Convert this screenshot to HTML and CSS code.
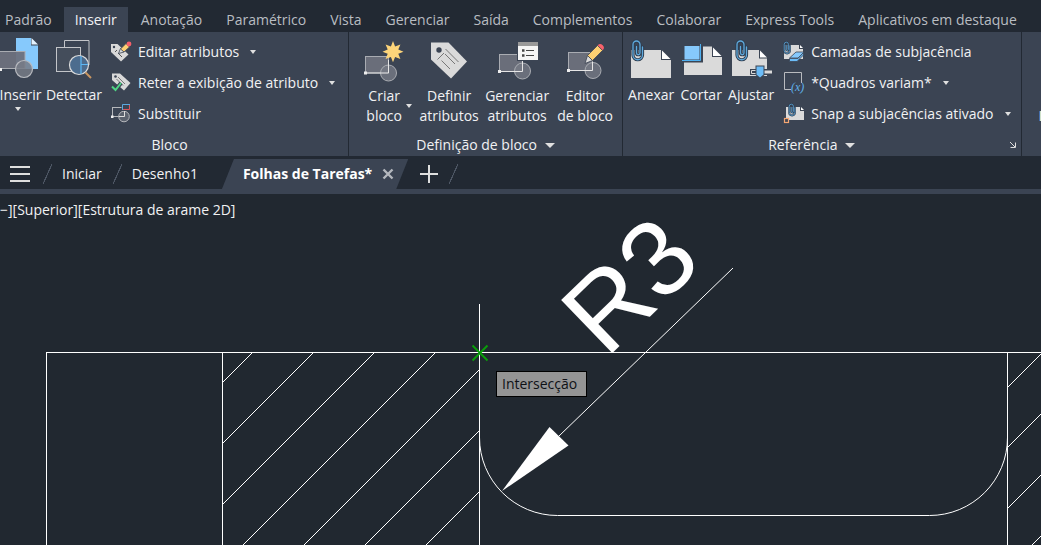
FILE: index.html
```html
<!DOCTYPE html>
<html lang="pt">
<head>
<meta charset="utf-8">
<title>Folhas de Tarefas</title>
<link rel="stylesheet" href="styles.css">
</head>
<body>
<svg class="defs" width="0" height="0" aria-hidden="true">
  <defs>
    <g id="paperclip" fill="none" stroke-linecap="round" stroke-linejoin="round">
      <path d="M5.500 7.500V14a1.700 1.700 0 0 0 3.500 0V5.500a3.500 3.500 0 0 0-7 0V16a4.700 4.700 0 0 0 9.500 0V8" stroke="#2d3c4e" stroke-width="3.200"/>
      <path d="M5.500 7.500V14a1.700 1.700 0 0 0 3.500 0V5.500a3.500 3.500 0 0 0-7 0V16a4.700 4.700 0 0 0 9.500 0V8" stroke="#5fa9dc" stroke-width="1.300"/>
    </g>
  </defs>
</svg>

<header class="ribbon">
  <nav class="ribbon-tabs">
    <button class="ribbon-tab">Padrão</button>
    <button class="ribbon-tab active">Inserir</button>
    <button class="ribbon-tab">Anotação</button>
    <button class="ribbon-tab">Paramétrico</button>
    <button class="ribbon-tab">Vista</button>
    <button class="ribbon-tab">Gerenciar</button>
    <button class="ribbon-tab">Saída</button>
    <button class="ribbon-tab">Complementos</button>
    <button class="ribbon-tab">Colaborar</button>
    <button class="ribbon-tab">Express Tools</button>
    <button class="ribbon-tab">Aplicativos em destaque</button>
  </nav>

  <div class="panels">
    <section class="panel">
      <div class="panel-body">
        <button class="tool tool-insert">
          <svg class="tool-icon" viewBox="0 0 40 44">
            <path d="M18 0H33V7.500H40V31H18Z" fill="#86c9fc"/>
            <path d="M33.500 0L40 6.500H33.500Z" fill="#e4f3ff"/>
            <rect x="-4" y="13.500" width="31" height="17" fill="#6d717d" fill-opacity=".95" stroke="#a9acb2"/>
            <rect x="1" y="30" width="3" height="3" fill="#eee"/>
            <circle cx="26" cy="31" r="8.500" fill="#777b86" fill-opacity=".85" stroke="#b9bbc0" stroke-width="1.200"/>
          </svg>
          <span class="tool-label">Inserir</span>
          <i class="caret"></i>
        </button>
        <button class="tool tool-detect">
          <svg class="tool-icon" viewBox="0 0 40 44" fill="none">
            <path d="M10.500 9V2.500H35V27" stroke="#c3c5c9"/>
            <rect x="2.500" y="9.500" width="24" height="24" fill="#444d5b" stroke="#c3c5c9"/>
            <circle cx="25" cy="27" r="9.500" fill="#4c6c8e" stroke="#dcdcdc" stroke-width="1.200"/>
            <path d="M27 18V36M27 26.500H34" stroke="#5cb8f5" stroke-width="1.200"/>
            <path d="M31.500 34.500L37 40" stroke="#c99660" stroke-width="2"/>
          </svg>
          <span class="tool-label">Detectar</span>
        </button>
        <div class="tool-list">
          <button class="row">
            <svg class="row-icon" viewBox="0 0 22 22">
              <path d="M1 3H7.500L18.500 13.500L11 20.500L1 11Z" fill="#d9d9d9"/>
              <circle cx="4" cy="6" r="1.200" fill="#3b4453"/>
              <path d="M5 11L7 9M8 12L12 16" stroke="#555" fill="none"/>
              <path d="M8.500 12.500L10.500 7.500L14 11Z" fill="#ddd" stroke="#3b4453" stroke-width=".8"/>
              <path d="M10.500 8L16 2.500L19.500 6L14 11Z" fill="#fdd072" stroke="#3b4453" stroke-width=".8"/>
              <circle cx="19" cy="3" r="2.400" fill="#f4606a"/>
            </svg>
            <span>Editar atributos</span><i class="caret"></i>
          </button>
          <button class="row">
            <svg class="row-icon" viewBox="0 0 22 22">
              <path d="M2 1.500H10L20.500 11L14 18.500L2 8Z" fill="#d9d9d9"/>
              <circle cx="5.500" cy="4.500" r="1.300" fill="#3b4453"/>
              <path d="M8 5L15 12M6.500 7L13 13.500" stroke="#777" fill="none"/>
              <path d="M2 14.500L5.500 18L11 11" stroke="#3b4453" stroke-width="4" fill="none"/>
              <path d="M2 14.500L5.500 18L11 11" stroke="#4fd584" stroke-width="2" fill="none"/>
            </svg>
            <span>Reter a exibição de atributo</span><i class="caret"></i>
          </button>
          <button class="row">
            <svg class="row-icon" viewBox="0 0 22 22" fill="none">
              <rect x="2.500" y="4.500" width="12" height="9" stroke="#b5b7bb"/>
              <rect x="1" y="12.500" width="2.500" height="2.500" fill="#eee"/>
              <circle cx="14" cy="13.500" r="5.300" fill="#646a76" fill-opacity=".8" stroke="#b5b7bb"/>
              <path d="M14.500 8V13.500H9" stroke="#ddd"/>
              <rect x="11.500" y="0" width="9" height="8" fill="#3b4453"/>
              <path d="M12.500 7V1.500H20" stroke="#5aa9e0"/>
              <path d="M13 6.500H19.500V2" stroke="#d8555d"/>
            </svg>
            <span>Substituir</span>
          </button>
        </div>
      </div>
      <div class="panel-title"><span>Bloco</span></div>
    </section>

    <section class="panel">
      <div class="panel-body">
        <button class="tool tool-create">
          <svg class="tool-icon" viewBox="0 0 40 44">
            <rect x="1.500" y="18.500" width="23" height="16.500" fill="#6a6e7a" stroke="#a9acb2"/>
            <circle cx="24.500" cy="35" r="8" fill="#777b86" fill-opacity=".8" stroke="#a9acb2"/>
            <path d="M1.500 35H24.500V22" stroke="#e6e6e6" fill="none"/>
            <rect x="0" y="33.500" width="3" height="3" fill="#eee"/>
            <path d="M29 3L31.100 8.400L36.400 6.400L34.300 11.600L39.500 13.700L34.300 15.800L36.400 21L31.100 19L29 24.300L26.900 19L21.600 21L23.700 15.800L18.500 13.700L23.700 11.600L21.600 6.400L26.900 8.400Z" fill="#fdd57a"/>
          </svg>
          <span class="tool-label">Criar<br>bloco</span>
          <i class="caret"></i>
        </button>
        <button class="tool tool-wide">
          <svg class="tool-icon" viewBox="0 0 40 44">
            <path d="M2 4.500H19.500L38 23.500L22 40.500L2 21.500Z" fill="#dadada"/>
            <circle cx="10" cy="12" r="2.700" fill="#3b4453"/>
            <path d="M16.500 11L29.500 24M16 16L26 26M8.500 21.500L15 15M12.500 22.500L21 31" stroke="#777" fill="none"/>
          </svg>
          <span class="tool-label">Definir<br>atributos</span>
        </button>
        <button class="tool tool-wide">
          <svg class="tool-icon" viewBox="0 0 40 44">
            <rect x="2.500" y="16.500" width="23" height="17" fill="#6a6e7a" stroke="#a9acb2"/>
            <circle cx="25.500" cy="33" r="8" fill="#777b86" fill-opacity=".8" stroke="#a9acb2"/>
            <path d="M2.500 33.500H25.500V22" stroke="#e6e6e6" fill="none"/>
            <rect x="1" y="32" width="3" height="3" fill="#eee"/>
            <rect x="20" y="4" width="22" height="19" fill="#3b4453"/>
            <rect x="21" y="4" width="20" height="18" fill="#f5f5f5"/>
            <rect x="21" y="4" width="20" height="4" fill="#999"/>
            <path d="M25 12.500H27.500M25 17.500H27.500" stroke="#444" stroke-width="2.500"/>
            <path d="M29 12.500H37M29 17.500H37" stroke="#444"/>
          </svg>
          <span class="tool-label">Gerenciar<br>atributos</span>
        </button>
        <button class="tool tool-wide">
          <svg class="tool-icon" viewBox="0 0 40 44">
            <rect x="3.500" y="14.500" width="24" height="18" fill="#6a6e7a" stroke="#a9acb2"/>
            <circle cx="28" cy="32.500" r="8" fill="#777b86" fill-opacity=".8" stroke="#a9acb2"/>
            <path d="M3.500 32.500H27.500V24" stroke="#e6e6e6" fill="none"/>
            <rect x="2" y="31" width="3" height="3" fill="#eee"/>
            <path d="M20 25.500L22.500 17.500L27.500 22.500Z" fill="#dadada" stroke="#3b4453" stroke-width=".8"/>
            <path d="M22.500 17.500L32.500 7.500L37.500 12.500L27.500 22.500Z" fill="#fdd072" stroke="#3b4453" stroke-width=".8"/>
            <path d="M32.700 7.300A3.500 3.500 0 1 1 37.700 12.300Z" fill="#f9626b"/>
          </svg>
          <span class="tool-label">Editor<br>de bloco</span>
        </button>
      </div>
      <div class="panel-title"><span>Definição de bloco</span><i class="caret caret-large"></i></div>
    </section>

    <section class="panel">
      <div class="panel-body panel-reference">
        <button class="tool tool-narrow">
          <svg class="tool-icon" viewBox="0 0 40 44">
            <path d="M0 12H30V22H40V40H0Z" fill="#dadada"/>
            <path d="M31 12.500L39.500 21H31Z" fill="#fff"/>
            <use href="#paperclip" transform="translate(0 1)"/>
          </svg>
          <span class="tool-label">Anexar</span>
        </button>
        <button class="tool tool-narrow">
          <svg class="tool-icon" viewBox="0 0 40 44">
            <path d="M3 8.500H31V19H41V37H3Z" fill="#dadada"/>
            <path d="M32 9.500L40.500 18H32Z" fill="#fff"/>
            <path d="M1 6H22V24.500H1Z" fill="#3b4453"/>
            <rect x="3.500" y="8" width="15" height="13.500" fill="#86c9fc"/>
            <path d="M1 22.500H19.500V6" stroke="#4fb0f0" fill="none"/>
          </svg>
          <span class="tool-label">Cortar</span>
        </button>
        <button class="tool tool-narrow">
          <svg class="tool-icon" viewBox="0 0 40 44">
            <path d="M1 12H28V20.500H36V38H1Z" fill="#dadada"/>
            <path d="M29 12.500L36 19.500H29Z" fill="#fff"/>
            <use href="#paperclip" transform="translate(4 1)"/>
            <path d="M19 31H42V37H19Z" fill="#3b4453"/>
            <path d="M20.500 32.500H26V35.500H20.500Z" fill="#3b4453" stroke="#dadada"/>
            <path d="M32 32.500H41V35.500H32Z" fill="#dadada"/>
            <path d="M24.500 27.500H33.500V37L29 41L24.500 37Z" fill="#3b4453"/>
            <path d="M25.500 28.500H32.500V36.500L29 39.500L25.500 36.500Z" fill="#6cbcf7"/>
          </svg>
          <span class="tool-label">Ajustar</span>
        </button>
        <div class="tool-list">
          <button class="row">
            <svg class="row-icon" viewBox="0 0 22 22">
              <path d="M1 4H16V8H20V18H1Z" fill="#dadada"/>
              <path d="M17 4L20 7H17Z" fill="#fff"/>
              <use href="#paperclip" transform="scale(.6)"/>
              <path d="M6.500 17L13 11H21L15 17Z" fill="#86c9fc" stroke="#3b4453" stroke-width=".8"/>
              <path d="M6.500 17.500V20.500H14L20.500 14V11.500L15 17.500Z" fill="#6cbcf7" stroke="#3b4453" stroke-width=".8"/>
            </svg>
            <span>Camadas de subjacência</span>
          </button>
          <button class="row">
            <svg class="row-icon" viewBox="0 0 22 22">
              <path d="M18.500 11V.500H1.500V17.500H8" stroke="#b9bbbf" fill="none"/>
              <text class="variable-mark" x="8" y="19">(x)</text>
            </svg>
            <span>*Quadros variam*</span><i class="caret"></i>
          </button>
          <button class="row">
            <svg class="row-icon" viewBox="0 0 22 22">
              <path d="M3 4H17V8H21V17H3Z" fill="#dadada"/>
              <path d="M18 4L21 7H18Z" fill="#fff"/>
              <use href="#paperclip" transform="translate(5 0) scale(.6)"/>
              <rect x="1.500" y="15.500" width="4" height="4" fill="#3b4453" stroke="#f5a673" stroke-width="1.200"/>
            </svg>
            <span>Snap a subjacências ativado</span><i class="caret"></i>
          </button>
        </div>
      </div>
      <div class="panel-title">
        <span>Referência</span><i class="caret caret-large"></i>
        <button class="launcher" aria-label="Opções de referência">
          <svg viewBox="0 0 8 8" width="8" height="8"><path d="M1 1L6 6M6.500 1.500V6.500H1.500" stroke="#dcdcdc" fill="none"/></svg>
        </button>
      </div>
    </section>

    <section class="panel panel-next">
      <button class="tool"><span class="tool-label">I</span></button>
    </section>
  </div>
</header>

<nav class="file-tabs">
  <button class="menu" aria-label="Menu"><span></span><span></span><span></span></button>
  <i class="slash"></i>
  <a class="file-tab" href="#">Iniciar</a>
  <i class="slash"></i>
  <a class="file-tab file-tab-drawing" href="#">Desenho1</a>
  <div class="file-active">
    <a href="#">Folhas de Tarefas*</a>
    <button class="close" aria-label="Fechar"><svg viewBox="0 0 12 12" width="12" height="12"><path d="M1.500 1.500L10.500 10.500M10.500 1.500L1.500 10.500" stroke="#b4b8be" stroke-width="2.400"/></svg></button>
  </div>
  <button class="add" aria-label="Novo desenho"><svg viewBox="0 0 18 18" width="18" height="18"><path d="M9 0V18M0 9H18" stroke="#dedede" stroke-width="2"/></svg></button>
  <i class="slash"></i>
</nav>

<main class="canvas">
  <svg class="drawing" fill="none" stroke="#fff">
    <g shape-rendering="crispEdges">
      <path d="M5000 158.500H46.500V5000M222.500 158V5000M479.500 110V5000M1007.500 158V5000"/>
      <path d="M222 189L253 158M222 250L314 158M222 311L375 158M222 372L436 158M283 372L479 176M344 372L479 237M405 372L479 298"/>
      <path d="M1007 194L1043 158M1007 254L1103 158M1007 315L1164 158M1007 376L1225 158"/>
    </g>
    <path d="M733 74L559 242"/>
    <path d="M479.500 243.500A78 78 0 0 0 557.500 321.500H929.500A78 78 0 0 0 1007.500 243.500"/>
    <path d="M502 297L549.500 233L568.500 251.500Z" fill="#fff" stroke="none"/>
    <text class="dimension" transform="translate(606 165) rotate(-44)">R3</text>
    <path d="M472.500 151.500L487.500 166.500M487.500 151.500L472.500 166.500" stroke="#0a9d0a" stroke-width="2"/>
  </svg>
  <div class="view-label">−][Superior][Estrutura de arame 2D]</div>
  <div class="tooltip" role="tooltip">Intersecção</div>
</main>
</body>
</html>
```
FILE: styles.css
```css
* { box-sizing: border-box; }
html, body { height: 100%; }
body {
  margin: 0;
  display: flex;
  flex-direction: column;
  overflow: hidden;
  background: #212830;
  color: #f1f2f3;
  font: 14px/20px "Open Sans", "Noto Sans", sans-serif;
}
button {
  margin: 0;
  padding: 0;
  border: 0;
  background: none;
  color: inherit;
  font: inherit;
}
a { color: inherit; text-decoration: none; }
svg { display: block; }
.defs { position: absolute; }

.ribbon { flex: none; background: #222933; }
.ribbon-tabs {
  display: flex;
  height: 32px;
  padding-top: 7px;
  margin-left: -7px;
  white-space: nowrap;
  color: #b9bdc2;
}
.ribbon-tab { flex: none; padding: 0 12px; }
.ribbon-tab.active { margin-right: 1px; padding: 0 11px; background: #3b4453; color: #f1f2f3; }

.panels {
  display: flex;
  margin-left: -9px;
  background: #3b4453;
  white-space: nowrap;
}
.panel {
  flex: none;
  display: flex;
  flex-direction: column;
  border-right: 1px solid #222933;
}
.panel-body { display: flex; height: 102px; padding: 4px 3px 0 4px; }
.panel:first-child .panel-body { padding-left: 0; padding-right: 13px; }
.panel-body.panel-reference { padding: 4px 10px 0 3px; }
.panel-title {
  display: flex;
  align-items: center;
  justify-content: center;
  gap: 8px;
  height: 22px;
}
.panel-reference + .panel-title {
  display: grid;
  grid-template-columns: 1fr auto auto 1fr 8px;
  padding-right: 4px;
}
.panel-reference + .panel-title span { grid-column: 2; }
.panel-reference + .panel-title .launcher { grid-column: 5; }
.panel-next { flex: 1; border: 0; padding: 72px 0 0 17px; overflow: hidden; align-items: flex-start; }

.tool {
  display: flex;
  flex-direction: column;
  align-items: center;
  padding-top: 2px;
}
.tool-icon { width: 40px; height: 44px; margin-bottom: 3px; overflow: visible; }
.tool-label { text-align: center; }
.tool-insert { width: 54px; }
.tool-insert .tool-label { padding-left: 5px; }
.tool-insert .caret { margin-top: 2px; }
.tool-detect { width: 58px; }
.tool-wide { width: 68px; }
.tool-narrow { width: 50px; }
.tool-wide .tool-icon, .tool-create .tool-icon { margin-bottom: 4px; }
.tool-create {
  display: grid;
  grid-template-columns: 1fr auto 1fr;
  align-content: start;
  justify-items: center;
  width: 62px;
}
.tool-create .tool-icon { grid-column: 1 / 4; }
.tool-create .tool-label { grid-column: 2; }
.tool-create .caret { align-self: center; }

.tool-list { display: flex; flex-direction: column; align-items: flex-start; margin-left: 7px; }
.row { display: flex; align-items: center; height: 31px; }
.row-icon { width: 22px; height: 22px; margin-right: 6px; overflow: visible; }
.row .caret { margin-left: 11px; }
.variable-mark { font: italic 12px "Liberation Serif", serif; fill: #5fb0ea; }

.caret {
  width: 0;
  height: 0;
  border: 3px solid transparent;
  border-top: 4px solid #e0e0e0;
  border-bottom: 0;
}
.caret-large { border-width: 5px 5px 0; }

.file-tabs {
  flex: none;
  display: flex;
  align-items: center;
  height: 38px;
  padding: 2px 0 0 10px;
  background: #222933;
  border-bottom: 5px solid #3b4453;
  white-space: nowrap;
}
.menu { display: grid; gap: 5px; width: 20px; }
.menu span { height: 2px; background: #dedede; }
.slash { width: 9px; height: 20px; margin: 0 10px 0 13px; background: linear-gradient(114deg, transparent 46%, #4e5765 47% 53%, transparent 54%); }
.file-tab + .slash { margin-left: 11px; }
.file-tab-drawing { margin-right: 24px; }
.file-active {
  display: flex;
  align-items: center;
  gap: 10px;
  align-self: stretch;
  margin-top: 1px;
  padding: 0 14px 0 21px;
  background: #3b4453;
  clip-path: polygon(12px 0, 100% 0, calc(100% - 12px) 100%, 0 100%);
  color: #fff;
  font-weight: 700;
}
.add { margin-left: 12px; }
.add + .slash { margin-left: 11px; }

.canvas { flex: 1; position: relative; min-height: 0; overflow: hidden; }
.drawing { position: absolute; inset: 0; width: 100%; height: 100%; }
.dimension { font: 107px "Liberation Sans", sans-serif; fill: #fff; stroke: none; }
.view-label { position: relative; padding-top: 6px; white-space: nowrap; }
.tooltip {
  position: absolute;
  top: 177px;
  left: 496px;
  padding: 2px 9px 2px 5px;
  border: 1px solid #000;
  background: #949494;
  color: #0e1116;
}
```
